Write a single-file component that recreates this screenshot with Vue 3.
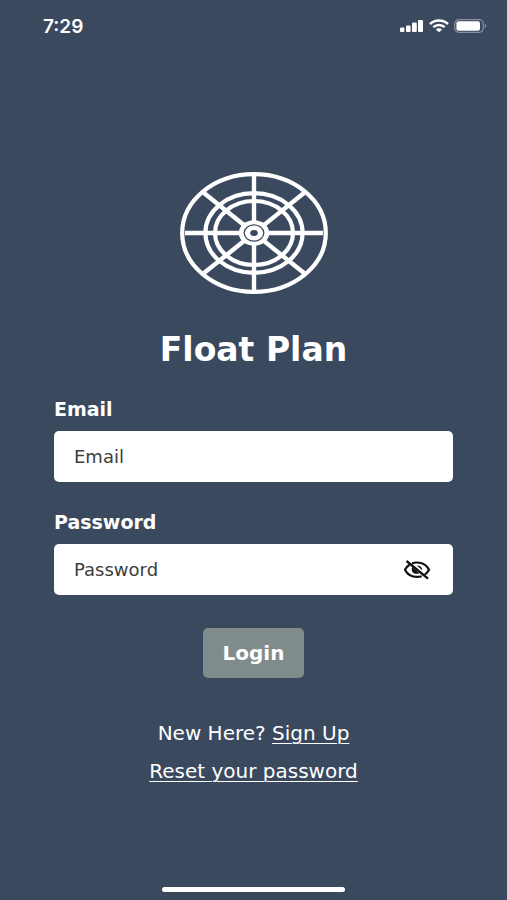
<script setup>
import { ref } from 'vue'

const email = ref('')
const password = ref('')
const showPassword = ref(false)
</script>

<template>
  <div class="screen">
    <header class="status">
      <span class="time">7:29</span>
      <div class="indicators">
        <svg width="24" height="14" viewBox="0 0 24 14" fill="#fff" aria-hidden="true">
          <rect x="0" y="8.5" width="4.4" height="4.5" rx="1" />
          <rect x="6" y="6.5" width="4.6" height="6.500" rx="1" />
          <rect x="12" y="3.500" width="4.800" height="9.500" rx="1" />
          <rect x="18" y="1" width="5" height="12" rx="1" />
        </svg>
        <svg width="20" height="14" viewBox="0 0 20 14" fill="none" stroke="#fff" aria-hidden="true">
          <path d="M1 5C6 .3 14 .3 19 5" stroke-width="2.5" />
          <path d="M4.3 8.200C7.600 5.200 12.400 5.200 15.700 8.200" stroke-width="2.500" />
          <path d="M6.800 10.500Q10 7.900 13.200 10.500L10 13.300Z" fill="#fff" stroke="none" />
        </svg>
        <svg width="33" height="14" viewBox="0 0 33 14" aria-hidden="true">
          <rect x=".7" y=".7" width="28.6" height="12.6" rx="4" fill="none" stroke="#8791a0" stroke-width="1.2" />
          <rect x="2.4" y="2.2" width="23.6" height="9.6" rx="2" fill="#fff" />
          <path d="M30.8 4.8Q34 7 30.8 9.2Z" fill="#8791a0" />
        </svg>
      </div>
    </header>

    <main class="content">
      <svg class="logo" width="148" height="122" viewBox="0 0 148 122" fill="none" stroke="#fff" aria-hidden="true">
        <ellipse cx="74" cy="61" rx="71.8" ry="58.8" stroke-width="4.2" />
        <ellipse cx="74" cy="61" rx="48.6" ry="39.8" stroke-width="4.2" />
        <ellipse cx="74" cy="61" rx="39" ry="32" stroke-width="4.2" />
        <path d="M74 4V118M5 61H143" stroke-width="4.4" />
        <path d="M24 21L124 101M124 21L24 101" stroke-width="4.4" />
        <ellipse cx="74" cy="61" rx="15.2" ry="12.8" fill="#fff" stroke="none" />
        <ellipse cx="74" cy="61" rx="9.8" ry="8.2" stroke="#3a495e" stroke-width="1.3" />
        <ellipse cx="74" cy="61" rx="3.8" ry="3" fill="#3a495e" stroke="none" />
      </svg>

      <h1 class="title">Float Plan</h1>

      <form class="form" @submit.prevent>
        <label class="label" for="email">Email</label>
        <div class="field">
          <input id="email" v-model="email" type="email" placeholder="Email" />
        </div>

        <label class="label" for="password">Password</label>
        <div class="field">
          <input
            id="password"
            v-model="password"
            :type="showPassword ? 'text' : 'password'"
            placeholder="Password"
          />
          <button class="toggle" type="button" aria-label="Show password" @click="showPassword = !showPassword">
            <svg width="28" height="20" viewBox="0 0 28 20" fill="none" stroke="#111" aria-hidden="true">
              <path d="M9 3.4Q11.2 2.5 14 2.5C19.5 2.5 23.8 5.2 26 9.7Q24.5 12.8 21.7 14.7" stroke-width="2.2" />
              <path d="M6.5 4.8Q3.5 6.7 2 9.7C4.2 14.2 8.5 16.9 14 16.9Q16.5 16.9 18.7 16.2" stroke-width="2.2" />
              <path d="M13.8 5.5Q19 5.600 19.200 10.300Z" fill="#111" stroke="none" />
              <path d="M9.3 7C7.300 11.500 10.800 15.300 16.300 13.300Z" fill="#111" stroke="none" />
              <path d="M3.5 1L25 18.7" stroke-width="2.3" />
            </svg>
          </button>
        </div>

        <button class="login" type="submit">Login</button>
      </form>

      <nav class="links">
        <p>New Here? <a href="#signup">Sign Up</a></p>
        <p><a href="#reset">Reset your password</a></p>
      </nav>
    </main>

    <div class="home-bar"></div>
  </div>
</template>

<style>
body {
  background: #3a495e;
}
</style>

<style scoped>
.screen {
  box-sizing: border-box;
  min-height: 100vh;
  display: flex;
  flex-direction: column;
  padding-bottom: 8px;
  background: #3a495e;
  color: #fff;
  font-family: 'DejaVu Sans', Verdana, sans-serif;
}

.status {
  display: flex;
  align-items: center;
  justify-content: space-between;
  height: 52px;
  padding: 0 20px 0 43px;
}
.time {
  font-family: Inter, sans-serif;
  font-size: 19px;
  font-weight: 600;
}
.indicators {
  display: flex;
  align-items: center;
  gap: 5px;
}

.content {
  display: flex;
  flex: 1;
  flex-direction: column;
  align-items: center;
  padding: 120px 54px 0;
}
.logo {
  display: block;
}
.title {
  margin: 34px 0 25px;
  font-size: 33px;
  line-height: 44px;
  font-weight: 700;
}

.form {
  width: 100%;
  display: flex;
  flex-direction: column;
}
.label {
  margin-bottom: 10px;
  font-size: 19px;
  line-height: 24px;
  font-weight: 700;
}
.field {
  display: flex;
  align-items: center;
  height: 51px;
  margin-bottom: 28px;
  border-radius: 5px;
  background: #fff;
}
.field input {
  flex: 1;
  min-width: 0;
  height: 100%;
  box-sizing: border-box;
  padding: 0 20px;
  border: 0;
  outline: 0;
  background: transparent;
  color: #333;
  font: inherit;
  font-size: 18px;
}
.field input::placeholder {
  color: #3d3d3d;
  opacity: 1;
}
.toggle {
  display: flex;
  margin-right: 22px;
  padding: 0;
  border: 0;
  background: none;
}
.login {
  align-self: center;
  height: 50px;
  margin-top: 5px;
  padding: 0 20px;
  border: 0;
  border-radius: 5px;
  background: #7f8c8b;
  color: #fff;
  font: inherit;
  font-size: 20px;
  font-weight: 700;
}

.links {
  display: flex;
  flex-direction: column;
  align-items: center;
  gap: 10px;
  margin-top: 41px;
  font-size: 20px;
  line-height: 28px;
}
.links p {
  margin: 0;
}
.links a {
  color: inherit;
  text-decoration: underline;
  text-decoration-thickness: 1px;
  text-underline-offset: 3px;
}

.home-bar {
  align-self: center;
  width: 36%;
  height: 5px;
  border-radius: 3px;
  background: #fff;
}
</style>
